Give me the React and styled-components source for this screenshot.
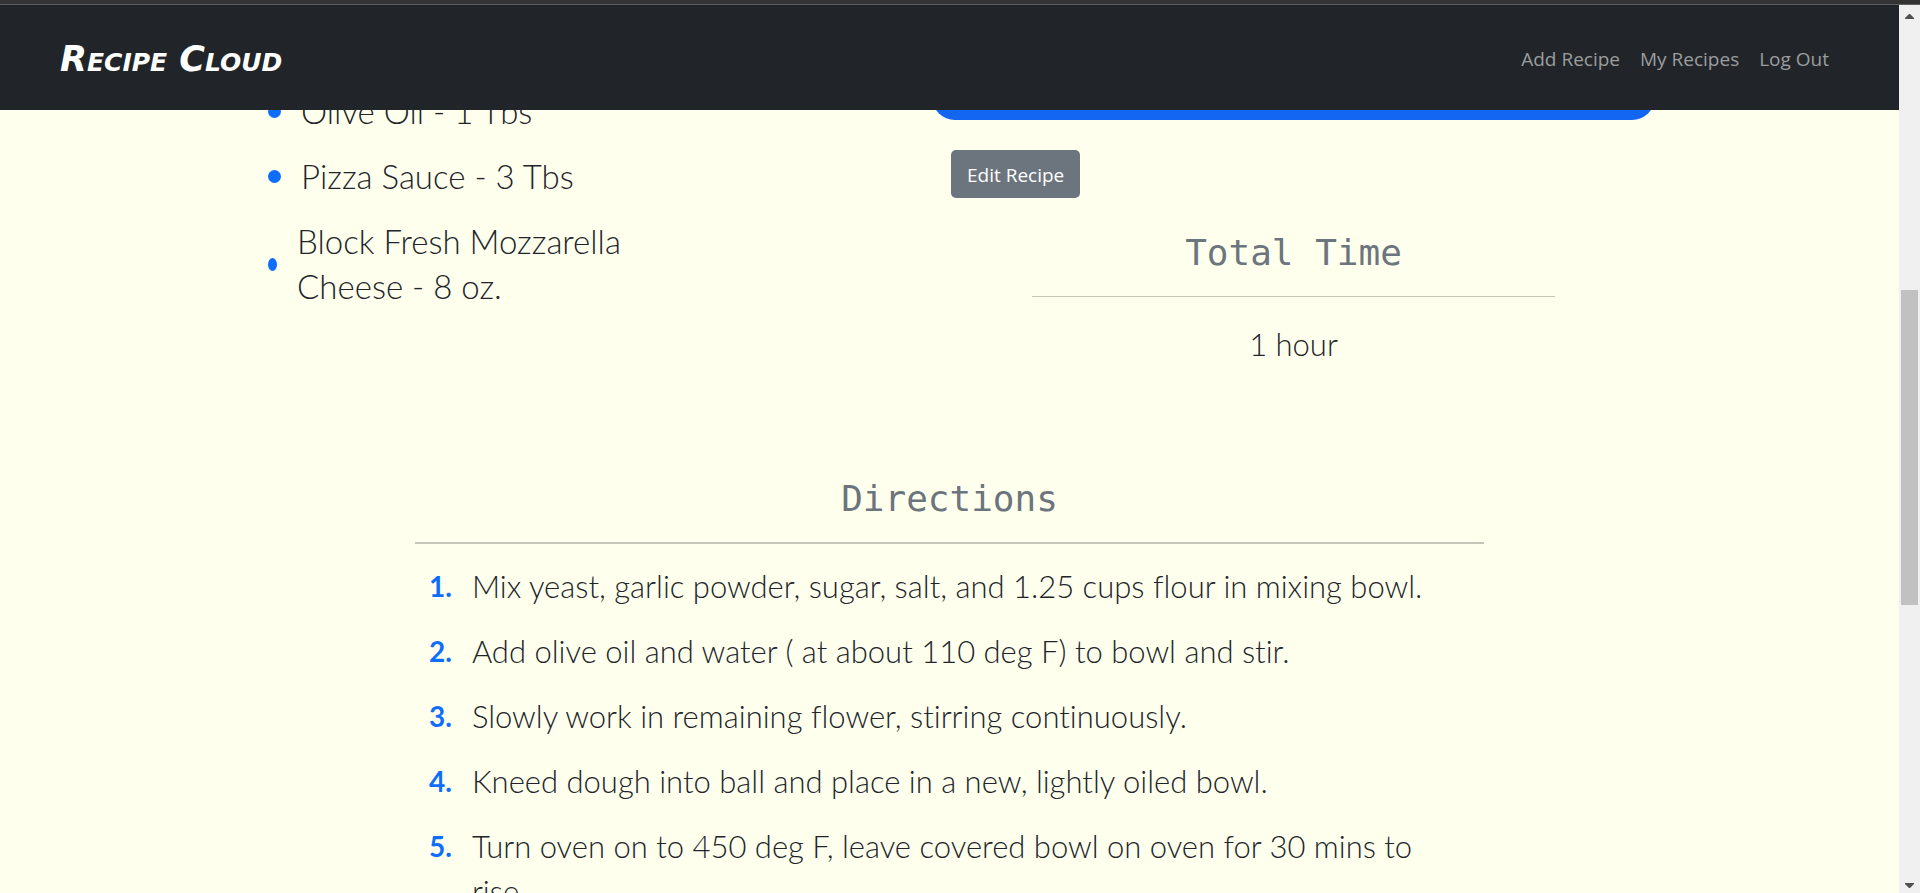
import React from "react";
import styled, { createGlobalStyle } from "styled-components";

const hand = `Lato, "Open Sans", sans-serif`;
const ui = `"Open Sans", "Noto Sans", sans-serif`;

const GlobalStyle = createGlobalStyle`
  *, *::before, *::after { box-sizing: border-box; }
  body { margin: 0; background: #ffffee; color: #212529; font-family: ${ui}; }
`;

const Window = styled.div`
  display: flex;
  flex-direction: column;
  height: 100vh;
  overflow: hidden;
`;

const WindowEdge = styled.div`
  flex: none;
  height: 5px;
  background: #333333;
  border-bottom: 1px solid #5f5f5f;
`;

const Viewport = styled.div`
  flex: 1;
  min-height: 0;
  display: flex;
`;

const Page = styled.div`
  flex: 1;
  min-width: 0;
  overflow: hidden;
`;

const Navbar = styled.header`
  position: relative;
  z-index: 1;
  display: flex;
  align-items: center;
  justify-content: space-between;
  height: 105px;
  padding: 2px 70px 0 60px;
  background: #212529;
`;

const Brand = styled.a`
  color: #ffffff;
  font: italic 700 35px/48px "DejaVu Sans", sans-serif;
  font-variant-caps: small-caps;
  text-decoration: none;
`;

const NavLinks = styled.nav`
  display: flex;
  gap: 20px;
`;

const NavLink = styled.a`
  color: #9b9d9e;
  font-size: 19px;
  line-height: 30px;
  text-decoration: none;
`;

const Main = styled.main`
  margin-top: -21px;
`;

const Overview = styled.div`
  display: grid;
  grid-template-columns: 664fr 723fr;
  padding: 0 244px 0 268px;
`;

const Ingredients = styled.ul`
  display: flex;
  flex-direction: column;
  gap: 20px;
  width: 360px;
  margin: 0;
  padding: 0;
  list-style: none;
`;

const Ingredient = styled.li`
  display: flex;
  align-items: center;
  gap: 20px;
  font: 300 33px/45px ${hand};
`;

const Bullet = styled.span`
  flex: none;
  width: ${(p) => (p.$narrow ? 9 : 13)}px;
  height: 13px;
  border-radius: 50%;
  background: #0d6efd;
`;

const Side = styled.section`
  display: flex;
  flex-direction: column;
`;

const Card = styled.div`
  height: 31px;
  border-radius: 0 0 23px 23px;
  background: #1266f1;
`;

const EditButton = styled.button`
  align-self: flex-start;
  height: 48px;
  margin: 30px 0 0 19px;
  padding: 2px 16px 0;
  border: 0;
  border-radius: 5px;
  background: #6c757d;
  color: #ffffff;
  font: 19px/30px ${ui};
`;

const TotalTime = styled.div`
  width: 523px;
  margin: 30px auto 0;
  text-align: center;
`;

const Heading = styled.h2`
  margin: 0;
  color: #6c757d;
  font: 400 36px/50px "DejaVu Sans Mono", monospace;
  text-align: center;
`;

const Rule = styled.hr`
  height: ${(p) => p.$size}px;
  margin: 18px 0 20px;
  border: 0;
  background: #c5c5b8;
`;

const Duration = styled.p`
  margin: 0;
  font: 300 31px/54px ${hand};
`;

const Directions = styled.section`
  max-width: 1069px;
  margin: 103px auto 0;
`;

const Steps = styled.ol`
  display: flex;
  flex-direction: column;
  gap: 20px;
  margin: 0;
  padding: 0 30px 0 14px;
  list-style: none;
`;

const Step = styled.li`
  display: flex;
  gap: 20px;
  font: 300 31px/45px ${hand};
  font-variant-ligatures: none;
`;

const StepNumber = styled.span`
  color: #0d6efd;
  font-size: 28px;
  font-weight: 700;
`;

const Scrollbar = styled.div`
  flex: none;
  display: flex;
  flex-direction: column;
  width: 21px;
  background: #f0f0f0;
`;

const ScrollArrow = styled.button`
  display: flex;
  align-items: center;
  justify-content: center;
  height: ${(p) => p.$height}px;
  padding: 0;
  border: 0;
  background: none;
`;

const ScrollGap = styled.div`
  flex: ${(p) => p.$share};
`;

const ScrollThumb = styled.div`
  flex: 315;
  margin: 0 2px;
  background: #c1c1c1;
`;

const ingredients = [
  { text: "Olive Oil - 1 Tbs" },
  { text: "Pizza Sauce - 3 Tbs" },
  { text: "Block Fresh Mozzarella Cheese - 8 oz.", narrow: true },
];

const steps = [
  "Mix yeast, garlic powder, sugar, salt, and 1.25 cups flour in mixing bowl.",
  "Add olive oil and water ( at about 110 deg F) to bowl and stir.",
  "Slowly work in remaining flower, stirring continuously.",
  "Kneed dough into ball and place in a new, lightly oiled bowl.",
  "Turn oven on to 450 deg F, leave covered bowl on oven for 30 mins to rise.",
];

const Arrow = ({ d }) => (
  <svg width="9" height="5" viewBox="0 0 9 5" aria-hidden="true">
    <path d={d} fill="#505050" />
  </svg>
);

export default function App() {
  return (
    <>
      <GlobalStyle />
      <Window>
        <WindowEdge />
        <Viewport>
          <Page>
            <Navbar>
              <Brand href="#">Recipe Cloud</Brand>
              <NavLinks>
                <NavLink href="#add">Add Recipe</NavLink>
                <NavLink href="#recipes">My Recipes</NavLink>
                <NavLink href="#logout">Log Out</NavLink>
              </NavLinks>
            </Navbar>
            <Main>
              <Overview>
                <Ingredients>
                  {ingredients.map((item) => (
                    <Ingredient key={item.text}>
                      <Bullet $narrow={item.narrow} />
                      <span>{item.text}</span>
                    </Ingredient>
                  ))}
                </Ingredients>
                <Side>
                  <Card />
                  <EditButton type="button">Edit Recipe</EditButton>
                  <TotalTime>
                    <Heading>Total Time</Heading>
                    <Rule $size={1} />
                    <Duration>1 hour</Duration>
                  </TotalTime>
                </Side>
              </Overview>
              <Directions>
                <Heading>Directions</Heading>
                <Rule $size={2} />
                <Steps>
                  {steps.map((step, i) => (
                    <Step key={step}>
                      <StepNumber>{i + 1}.</StepNumber>
                      <span>{step}</span>
                    </Step>
                  ))}
                </Steps>
              </Directions>
            </Main>
          </Page>
          <Scrollbar>
            <ScrollArrow type="button" aria-label="Scroll up" $height={23}>
              <Arrow d="M4 0h1L9 4v1H0V4z" />
            </ScrollArrow>
            <ScrollGap $share={262} />
            <ScrollThumb />
            <ScrollGap $share={273} />
            <ScrollArrow type="button" aria-label="Scroll down" $height={15}>
              <Arrow d="M0 0h9v1L5 5H4L0 1z" />
            </ScrollArrow>
          </Scrollbar>
        </Viewport>
      </Window>
    </>
  );
}
